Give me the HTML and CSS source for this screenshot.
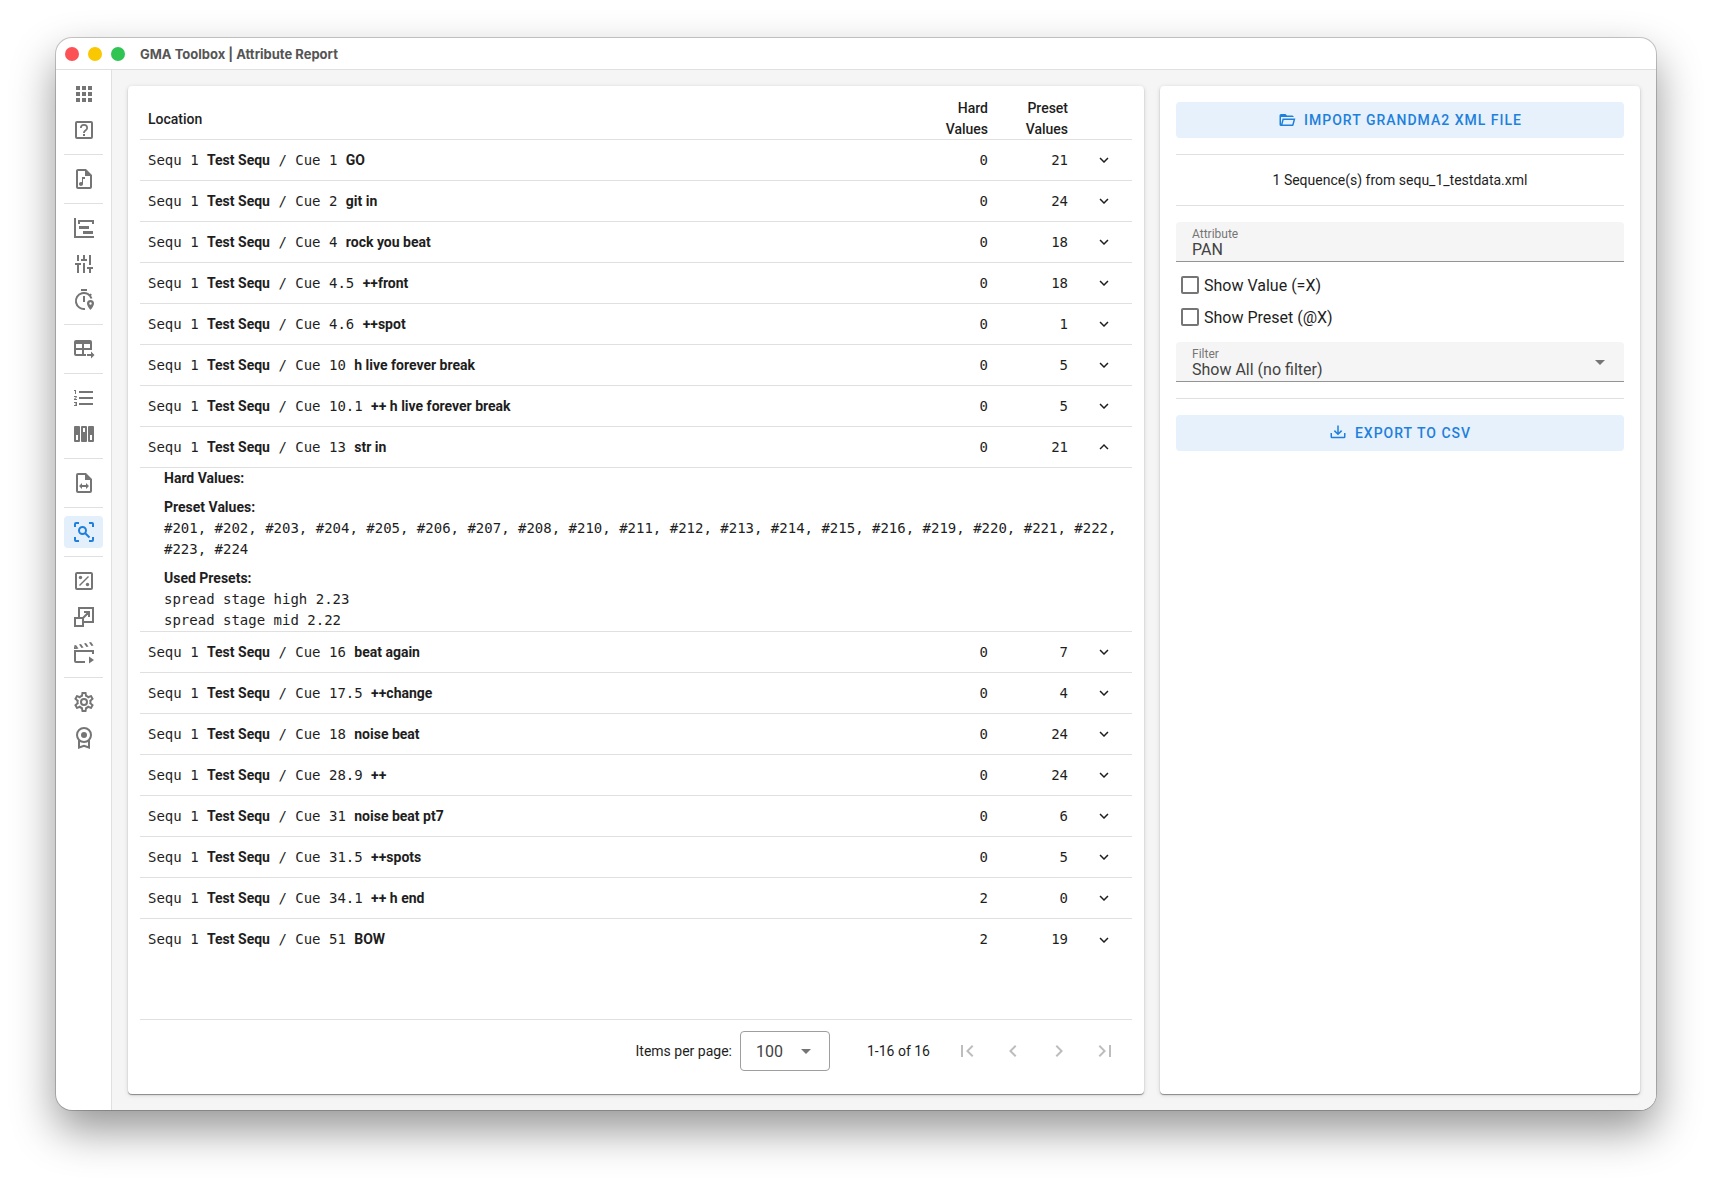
FILE: index.html
```html
<!DOCTYPE html>
<html lang="en">
<head>
<meta charset="utf-8">
<meta name="viewport" content="width=device-width, initial-scale=1">
<title>GMA Toolbox | Attribute Report</title>
<link rel="stylesheet" href="styles.css">
</head>
<body>
<svg class="sprite" aria-hidden="true">
  <symbol id="down" viewBox="0 0 24 24"><path d="M7.41 8.58L12 13.17l4.59-4.59L18 10l-6 6-6-6z"/></symbol>
  <symbol id="up" viewBox="0 0 24 24"><path d="M7.41 15.41L12 10.83l4.59 4.58L18 14l-6-6-6 6z"/></symbol>
  <symbol id="caret" viewBox="0 0 24 24"><path d="M7 10l5 5 5-5z"/></symbol>
</svg>
<div class="window">
  <header class="titlebar">
    <span class="light red"></span><span class="light yellow"></span><span class="light green"></span>
    <h1 class="title">GMA Toolbox | Attribute Report</h1>
  </header>
  <div class="body">
    <nav class="sidebar" aria-label="Tools">
      <a class="tool" href="#apps" aria-label="Apps"><svg class="icon" viewBox="0 0 24 24"><path d="M16 20h4v-4h-4zM16 14h4v-4h-4zM10 8h4V4h-4zM16 8h4V4h-4zM10 14h4v-4h-4zM4 14h4v-4H4zM4 20h4v-4H4zM10 20h4v-4h-4zM4 8h4V4H4z"/></svg></a>
      <a class="tool" href="#help" aria-label="Help"><svg class="icon" viewBox="0 0 24 24"><path class="line" d="M5 4h14a1 1 0 0 1 1 1v14a1 1 0 0 1-1 1H5a1 1 0 0 1-1-1V5a1 1 0 0 1 1-1z"/><path d="M11 16h2v2h-2zM12 6a4 4 0 0 0-4 4h1.700a2.300 2.300 0 1 1 4.600 0c0 1.600-3.200 2-3.200 5h1.800c0-2 3.100-2.500 3.100-5a4 4 0 0 0-4-4z"/></svg></a>
      <hr class="rule">
      <a class="tool" href="#music" aria-label="Music files"><svg class="icon" viewBox="0 0 24 24"><path d="M14 2H6C4.900 2 4 2.900 4 4V20C4 21.100 4.900 22 6 22H18C19.100 22 20 21.100 20 20V8L14 2M18 20H6V4H13V9H18V20M13 10V12H11V17C11 18.100 10.100 19 9 19S7 18.100 7 17 7.900 15 9 15C9.400 15 9.700 15.100 10 15.300V10H13Z"/></svg></a>
      <hr class="rule">
      <a class="tool" href="#timeline" aria-label="Timeline"><svg class="icon" viewBox="0 0 24 24"><path d="M2 2H4V20H22V22H2V2M7 10H17V13H7V10M11 15H21V18H11V15M6 4H22V8H20V6H8V8H6V4Z"/></svg></a>
      <a class="tool" href="#faders" aria-label="Faders"><svg class="icon" viewBox="0 0 24 24"><path d="M5 3h2v6H5zM3 11h6v2H7v8H5v-8H3zM11 3h2v4h2v2H9V7h2zM11 11h2v10h-2zM17 3h2v10h-2zM15 15h6v2h-2v4h-2v-4h-2z"/></svg></a>
      <a class="tool" href="#timing" aria-label="Timing"><svg class="icon" viewBox="0 0 24 24"><path d="M9 1h6v2H9zM11 8h2v6h-2z"/><path class="line" d="M13 20.900A8 8 0 1 1 19.500 10.500M17.500 7.800l1.700-1.700"/><path fill-rule="evenodd" d="M18.500 12a3.500 3.500 0 0 0-3.500 3.500c0 2.600 3.500 6.500 3.500 6.500s3.500-3.900 3.500-6.500a3.500 3.500 0 0 0-3.500-3.500zm0 4.700a1.200 1.200 0 1 1 0-2.400 1.200 1.200 0 0 1 0 2.400z"/></svg></a>
      <hr class="rule">
      <a class="tool" href="#table" aria-label="Table export"><svg class="icon" viewBox="0 0 24 24"><path fill-rule="evenodd" d="M4 3h14a2 2 0 0 1 2 2v8h-8v4h2v2H4a2 2 0 0 1-2-2V5a2 2 0 0 1 2-2zm0 4v4h6V7zm8 0v4h6V7zM4 13v4h6v-4z"/><path d="M15 17h4v-2.500l3.500 3.500-3.500 3.500V19h-4z"/></svg></a>
      <hr class="rule">
      <a class="tool" href="#list" aria-label="Numbered list"><svg class="icon" viewBox="0 0 24 24"><path d="M7 13V11H21V13H7M7 19V17H21V19H7M7 7V5H21V7H7M3 8V5H2V4H4V8H3M2 17V16H5V20H2V19H4V18.500H3V17.500H4V17H2M4.250 10A.75.75 0 0 1 5 10.750C5 10.950 4.920 11.140 4.790 11.270L3.120 13H5V14H2V13.080L4 11H2V10H4.250Z"/></svg></a>
      <a class="tool" href="#executors" aria-label="Executors"><svg class="icon" viewBox="0 0 24 24"><path fill-rule="evenodd" d="M3 4h4a1 1 0 0 1 1 1v14a1 1 0 0 1-1 1H3a1 1 0 0 1-1-1V5a1 1 0 0 1 1-1zm1 9v5h2v-5zM10 4h4a1 1 0 0 1 1 1v14a1 1 0 0 1-1 1h-4a1 1 0 0 1-1-1V5a1 1 0 0 1 1-1zm1 2v4h2V6zM17 4h4a1 1 0 0 1 1 1v14a1 1 0 0 1-1 1h-4a1 1 0 0 1-1-1V5a1 1 0 0 1 1-1zm1 9v5h2v-5z"/></svg></a>
      <hr class="rule">
      <a class="tool" href="#convert" aria-label="Convert file"><svg class="icon" viewBox="0 0 24 24"><path d="M14 2H6a2 2 0 0 0-2 2v16a2 2 0 0 0 2 2h12a2 2 0 0 0 2-2V8l-6-6m4 18H6V4h7v5h5v11M7 15l3-3v2h4v-2l3 3-3 3v-2h-4v2z"/></svg></a>
      <hr class="rule">
      <a class="tool active" href="#report" aria-label="Attribute report" aria-current="page"><svg class="icon" viewBox="0 0 24 24"><path class="line" d="M3 7V4a1 1 0 0 1 1-1h3M17 3h3a1 1 0 0 1 1 1v3M21 17v3a1 1 0 0 1-1 1h-3M7 21H4a1 1 0 0 1-1-1v-3"/><circle class="line" cx="10.500" cy="10.500" r="3.500"/><path class="line" d="M13 13l4.500 4.500"/></svg></a>
      <hr class="rule">
      <a class="tool" href="#percent" aria-label="Percent"><svg class="icon" viewBox="0 0 24 24"><path class="line" d="M5 4h14a1 1 0 0 1 1 1v14a1 1 0 0 1-1 1H5a1 1 0 0 1-1-1V5a1 1 0 0 1 1-1z"/><path class="thin" d="M7.500 16.500l9-9"/><circle cx="8.500" cy="8.500" r="1.700"/><circle cx="15.500" cy="15.500" r="1.700"/></svg></a>
      <a class="tool" href="#scale" aria-label="Scale"><svg class="icon" viewBox="0 0 24 24"><path class="line" d="M7 12V3h14v14h-9M3 13h8v8H3zM11 13l6-6M12 7h5v5"/></svg></a>
      <a class="tool" href="#movie" aria-label="Movie"><svg class="icon" viewBox="0 0 24 24"><path class="line" d="M21 13v-3H3v10a1 1 0 0 0 1 1h9"/><path d="M2 4.500l2-.4 2.500 3.400-2 .4zM7 3.500l2-.4 2.500 3.400-2 .4zM12 2.500l2-.4 2.500 3.400-2 .4zM17 1.500l2-.4 2.500 3.400-2 .4zM2 5l2.500 3H2zM17 15.500l5 3.500-5 3.500z"/></svg></a>
      <hr class="rule">
      <a class="tool" href="#settings" aria-label="Settings"><svg class="icon" viewBox="0 0 24 24"><path d="M12,8A4,4 0 0,1 16,12A4,4 0 0,1 12,16A4,4 0 0,1 8,12A4,4 0 0,1 12,8M12,10A2,2 0 0,0 10,12A2,2 0 0,0 12,14A2,2 0 0,0 14,12A2,2 0 0,0 12,10M10,22C9.75,22 9.54,21.82 9.5,21.58L9.13,18.93C8.5,18.68 7.96,18.34 7.44,17.94L4.95,18.95C4.73,19.03 4.46,18.95 4.34,18.73L2.34,15.27C2.21,15.05 2.27,14.78 2.46,14.63L4.57,12.97L4.5,12L4.57,11L2.46,9.37C2.27,9.22 2.21,8.95 2.34,8.73L4.34,5.27C4.46,5.05 4.73,4.96 4.95,5.05L7.44,6.05C7.96,5.66 8.5,5.32 9.13,5.07L9.5,2.42C9.54,2.18 9.75,2 10,2H14C14.25,2 14.46,2.18 14.5,2.42L14.87,5.07C15.5,5.32 16.04,5.66 16.56,6.05L19.05,5.05C19.27,4.96 19.54,5.05 19.66,5.27L21.66,8.73C21.79,8.95 21.73,9.22 21.54,9.37L19.43,11L19.5,12L19.43,13L21.54,14.63C21.73,14.78 21.79,15.05 21.66,15.27L19.66,18.73C19.54,18.95 19.27,19.04 19.05,18.95L16.56,17.95C16.04,18.34 15.5,18.68 14.87,18.93L14.5,21.58C14.46,21.82 14.25,22 14,22H10M11.25,4L10.88,6.61C9.68,6.86 8.62,7.5 7.85,8.39L5.44,7.35L4.69,8.65L6.8,10.2C6.4,11.37 6.4,12.64 6.8,13.8L4.68,15.36L5.43,16.66L7.86,15.62C8.63,16.5 9.68,17.14 10.87,17.38L11.24,20H12.76L13.13,17.39C14.32,17.14 15.37,16.5 16.14,15.62L18.57,16.66L19.32,15.36L17.2,13.81C17.6,12.64 17.6,11.37 17.2,10.2L19.31,8.65L18.56,7.35L16.15,8.39C15.38,7.5 14.32,6.86 13.12,6.62L12.75,4H11.25Z"/></svg></a>
      <a class="tool" href="#license" aria-label="License"><svg class="icon" viewBox="0 0 24 24"><circle class="line" cx="12" cy="9" r="7"/><circle cx="12" cy="9" r="3"/><path class="line" d="M7 14v7.500l5-1.800 5 1.800V14"/></svg></a>
    </nav>
    <main class="content">
      <section class="card report">
        <table class="cues">
          <thead>
            <tr><th scope="col">Location</th><th class="num" scope="col">Hard Values</th><th class="num" scope="col">Preset Values</th><th class="toggle"></th></tr>
          </thead>
          <tbody>
            <tr><td>Sequ 1 <b>Test Sequ</b> / Cue 1 <b>GO</b></td><td class="num">0</td><td class="num">21</td><td class="toggle"><button class="expand" aria-label="Expand"><svg class="small"><use href="#down"/></svg></button></td></tr>
            <tr><td>Sequ 1 <b>Test Sequ</b> / Cue 2 <b>git in</b></td><td class="num">0</td><td class="num">24</td><td class="toggle"><button class="expand" aria-label="Expand"><svg class="small"><use href="#down"/></svg></button></td></tr>
            <tr><td>Sequ 1 <b>Test Sequ</b> / Cue 4 <b>rock you beat</b></td><td class="num">0</td><td class="num">18</td><td class="toggle"><button class="expand" aria-label="Expand"><svg class="small"><use href="#down"/></svg></button></td></tr>
            <tr><td>Sequ 1 <b>Test Sequ</b> / Cue 4.5 <b>++front</b></td><td class="num">0</td><td class="num">18</td><td class="toggle"><button class="expand" aria-label="Expand"><svg class="small"><use href="#down"/></svg></button></td></tr>
            <tr><td>Sequ 1 <b>Test Sequ</b> / Cue 4.6 <b>++spot</b></td><td class="num">0</td><td class="num">1</td><td class="toggle"><button class="expand" aria-label="Expand"><svg class="small"><use href="#down"/></svg></button></td></tr>
            <tr><td>Sequ 1 <b>Test Sequ</b> / Cue 10 <b>h live forever break</b></td><td class="num">0</td><td class="num">5</td><td class="toggle"><button class="expand" aria-label="Expand"><svg class="small"><use href="#down"/></svg></button></td></tr>
            <tr><td>Sequ 1 <b>Test Sequ</b> / Cue 10.1 <b>++ h live forever break</b></td><td class="num">0</td><td class="num">5</td><td class="toggle"><button class="expand" aria-label="Expand"><svg class="small"><use href="#down"/></svg></button></td></tr>
            <tr><td>Sequ 1 <b>Test Sequ</b> / Cue 13 <b>str in</b></td><td class="num">0</td><td class="num">21</td><td class="toggle"><button class="expand" aria-label="Collapse" aria-expanded="true"><svg class="small"><use href="#up"/></svg></button></td></tr>
            <tr class="details"><td colspan="4">
              <div class="detail-list">
                <div><b>Hard Values:</b></div>
                <div><b>Preset Values:</b><br>#201, #202, #203, #204, #205, #206, #207, #208, #210, #211, #212, #213, #214, #215, #216, #219, #220, #221, #222, #223, #224</div>
                <div><b>Used Presets:</b><br>spread stage high 2.23<br>spread stage mid 2.22</div>
              </div>
            </td></tr>
            <tr><td>Sequ 1 <b>Test Sequ</b> / Cue 16 <b>beat again</b></td><td class="num">0</td><td class="num">7</td><td class="toggle"><button class="expand" aria-label="Expand"><svg class="small"><use href="#down"/></svg></button></td></tr>
            <tr><td>Sequ 1 <b>Test Sequ</b> / Cue 17.5 <b>++change</b></td><td class="num">0</td><td class="num">4</td><td class="toggle"><button class="expand" aria-label="Expand"><svg class="small"><use href="#down"/></svg></button></td></tr>
            <tr><td>Sequ 1 <b>Test Sequ</b> / Cue 18 <b>noise beat</b></td><td class="num">0</td><td class="num">24</td><td class="toggle"><button class="expand" aria-label="Expand"><svg class="small"><use href="#down"/></svg></button></td></tr>
            <tr><td>Sequ 1 <b>Test Sequ</b> / Cue 28.9 <b>++</b></td><td class="num">0</td><td class="num">24</td><td class="toggle"><button class="expand" aria-label="Expand"><svg class="small"><use href="#down"/></svg></button></td></tr>
            <tr><td>Sequ 1 <b>Test Sequ</b> / Cue 31 <b>noise beat pt7</b></td><td class="num">0</td><td class="num">6</td><td class="toggle"><button class="expand" aria-label="Expand"><svg class="small"><use href="#down"/></svg></button></td></tr>
            <tr><td>Sequ 1 <b>Test Sequ</b> / Cue 31.5 <b>++spots</b></td><td class="num">0</td><td class="num">5</td><td class="toggle"><button class="expand" aria-label="Expand"><svg class="small"><use href="#down"/></svg></button></td></tr>
            <tr><td>Sequ 1 <b>Test Sequ</b> / Cue 34.1 <b>++ h end</b></td><td class="num">2</td><td class="num">0</td><td class="toggle"><button class="expand" aria-label="Expand"><svg class="small"><use href="#down"/></svg></button></td></tr>
            <tr><td>Sequ 1 <b>Test Sequ</b> / Cue 51 <b>BOW</b></td><td class="num">2</td><td class="num">19</td><td class="toggle"><button class="expand" aria-label="Expand"><svg class="small"><use href="#down"/></svg></button></td></tr>
          </tbody>
        </table>
        <footer class="pager">
          <label for="per-page">Items per page:</label>
          <div class="page-size">
            <select id="per-page"><option>100</option></select>
            <svg class="caret"><use href="#caret"/></svg>
          </div>
          <span class="range">1-16 of 16</span>
          <button class="page" disabled aria-label="First page"><svg class="icon" viewBox="0 0 24 24"><path d="M18.410 16.590L13.820 12l4.590-4.590L17 6l-6 6 6 6zM6 6h2v12H6z"/></svg></button>
          <button class="page" disabled aria-label="Previous page"><svg class="icon" viewBox="0 0 24 24"><path d="M15.410 16.580L10.830 12l4.580-4.590L14 6l-6 6 6 6z"/></svg></button>
          <button class="page" disabled aria-label="Next page"><svg class="icon" viewBox="0 0 24 24"><path d="M8.590 16.580L13.170 12 8.590 7.410 10 6l6 6-6 6z"/></svg></button>
          <button class="page" disabled aria-label="Last page"><svg class="icon" viewBox="0 0 24 24"><path d="M5.590 7.410L10.180 12l-4.590 4.590L7 18l6-6-6-6zM16 6h2v12h-2z"/></svg></button>
        </footer>
      </section>
      <aside class="card options">
        <button class="action"><svg class="small" viewBox="0 0 24 24"><path d="M6.100 10L4 18V8h17a2 2 0 0 0-2-2h-7l-2-2H4a2 2 0 0 0-2 2v12a2 2 0 0 0 2 2h15c.9 0 1.700-.6 1.900-1.500L23.200 10H6.100M19 18H6l1.600-6h13z"/></svg>IMPORT GRANDMA2 XML FILE</button>
        <p class="source">1 Sequence(s) from sequ_1_testdata.xml</p>
        <div class="field">
          <label for="attribute">Attribute</label>
          <input id="attribute" type="text" value="PAN">
        </div>
        <div class="checks">
          <label class="check"><input type="checkbox">Show Value (=X)</label>
          <label class="check"><input type="checkbox">Show Preset (@X)</label>
        </div>
        <div class="field">
          <label for="filter">Filter</label>
          <select id="filter"><option>Show All (no filter)</option></select>
          <svg class="caret"><use href="#caret"/></svg>
        </div>
        <hr class="section">
        <button class="action"><svg class="small" viewBox="0 0 24 24"><path d="M2 12h2v5h16v-5h2v5a2 2 0 0 1-2 2H4a2 2 0 0 1-2-2v-5M12 15l5.550-5.460-1.420-1.410L13 11.250V2h-2v9.250L7.880 8.130 6.460 9.550z"/></svg>EXPORT TO CSV</button>
      </aside>
    </main>
  </div>
</div>
</body>
</html>
```
FILE: styles.css
```css
*, *::before, *::after { box-sizing: border-box; }

body {
  display: flex;
  min-height: 100vh;
  margin: 0;
  padding: 38px 56px 74px;
  background: #fff;
  color: #1e1e1e;
  font: 14px/21px Roboto, sans-serif;
}

button, input, select { margin: 0; padding: 0; border: 0; background: none; color: inherit; font: inherit; }
select, input { appearance: none; }
svg { display: block; fill: currentColor; }
.sprite { position: absolute; width: 0; height: 0; }
.icon { width: 24px; height: 24px; }
.small { width: 18px; height: 18px; }
.line, .thin { fill: none; stroke: currentColor; stroke-width: 2; }
.thin { stroke-width: 1.5; }

.window {
  display: flex;
  flex: 1;
  flex-direction: column;
  min-width: 0;
  overflow: hidden;
  border-radius: 16px;
  background: #fff;
  box-shadow: 0 0 0 1px rgba(0, 0, 0, .2), 0 20px 44px rgba(0, 0, 0, .42);
}

.titlebar {
  display: flex;
  align-items: center;
  gap: 9px;
  height: 32px;
  padding-left: 9px;
  border-bottom: 1px solid #e0e0e0;
}
.light { width: 14px; height: 14px; border-radius: 50%; }
.red { background: #fc5255; }
.yellow { background: #fac800; }
.green { background: #30c552; }
.title { margin: 0 0 0 6px; color: #555; font: 700 13px/20px Inter, sans-serif; }

.body { display: flex; flex: 1; }

.sidebar {
  display: flex;
  flex-direction: column;
  gap: 4px;
  width: 56px;
  padding: 8px;
  border-right: 1px solid #e0e0e0;
}
.tool {
  display: flex;
  align-items: center;
  justify-content: center;
  height: 32px;
  border-radius: 4px;
  color: #757575;
}
.active { background: #e3effb; color: #1e80dc; }
.rule { width: 100%; margin: 4px 0; border: 0; border-top: 1px solid #e0e0e0; }

.content {
  display: flex;
  flex: 1;
  gap: 16px;
  min-width: 0;
  padding: 16px;
  background: #f5f5f5;
}
.card {
  display: flex;
  flex-direction: column;
  border-radius: 4px;
  background: #fff;
  box-shadow: 0 1px 1px rgba(0, 0, 0, .4), 0 1px 5px rgba(0, 0, 0, .14);
}
.report { flex: 1; min-width: 0; padding: 12px; }
.options { width: 480px; padding: 16px; }

.cues { width: 100%; border-collapse: separate; border-spacing: 0; table-layout: fixed; }
.cues th, .cues td { padding: 0 8px; border-bottom: 1px solid #e0e0e0; text-align: left; }
.cues th { height: 42px; border-bottom: 0; box-shadow: inset 0 -1px #e0e0e0; font-weight: 500; }
.cues td { height: 41px; font-family: "DejaVu Sans Mono", monospace; }
.cues b { font-family: Roboto, sans-serif; font-weight: 700; }
.cues .num { width: 80px; text-align: right; }
.cues .toggle { width: 56px; padding: 0; }
.cues tr:last-child td { border-bottom: 0; }
.cues .details td { padding: 0 8px 0 24px; }
.expand { display: flex; align-items: center; justify-content: center; width: 100%; height: 40px; }
.detail-list { display: flex; flex-direction: column; gap: 8px; }

.pager {
  display: flex;
  align-items: center;
  justify-content: flex-end;
  height: 63px;
  margin-top: auto;
  padding-right: 4px;
  border-top: 1px solid #e0e0e0;
}
.page-size { position: relative; width: 90px; margin-left: 8px; }
.page-size select {
  display: block;
  width: 100%;
  height: 40px;
  padding-left: 15px;
  border: 1px solid #9e9e9e;
  border-radius: 4px;
  color: #424242;
  font-size: 16px;
}
.caret { position: absolute; width: 24px; height: 24px; color: #757575; pointer-events: none; }
.page-size .caret { top: 8px; right: 12px; }
.range { margin: 0 14px 0 37px; }
.page { display: flex; align-items: center; justify-content: center; width: 46px; height: 40px; color: #bdbdbd; }

.action {
  display: flex;
  align-items: center;
  justify-content: center;
  gap: 8px;
  height: 36px;
  border-radius: 4px;
  background: #e6f1fb;
  color: #1e80dc;
  font-weight: 500;
  letter-spacing: 1px;
}
.source {
  margin: 16px 0;
  padding: 15px 0 14px;
  border: solid #e0e0e0;
  border-width: 1px 0;
  text-align: center;
}
.field {
  position: relative;
  display: flex;
  flex-direction: column;
  height: 40px;
  padding: 5px 16px 2px;
  border-bottom: 1px solid #949494;
  border-radius: 4px 4px 0 0;
  background: #f5f5f5;
}
.field label { color: #757575; font-size: 12px; line-height: 14px; }
.field input, .field select { height: 18px; color: #424242; font-size: 16px; line-height: 18px; }
.field .caret { top: 8px; right: 12px; }
.checks { padding: 7px 5px 9px; }
.check { display: flex; align-items: center; gap: 5px; height: 32px; font-size: 16px; }
.check input { width: 18px; height: 18px; border: 2px solid #757575; border-radius: 2px; }
.section { width: 100%; margin: 16px 0; border: 0; border-top: 1px solid #e0e0e0; }
```
